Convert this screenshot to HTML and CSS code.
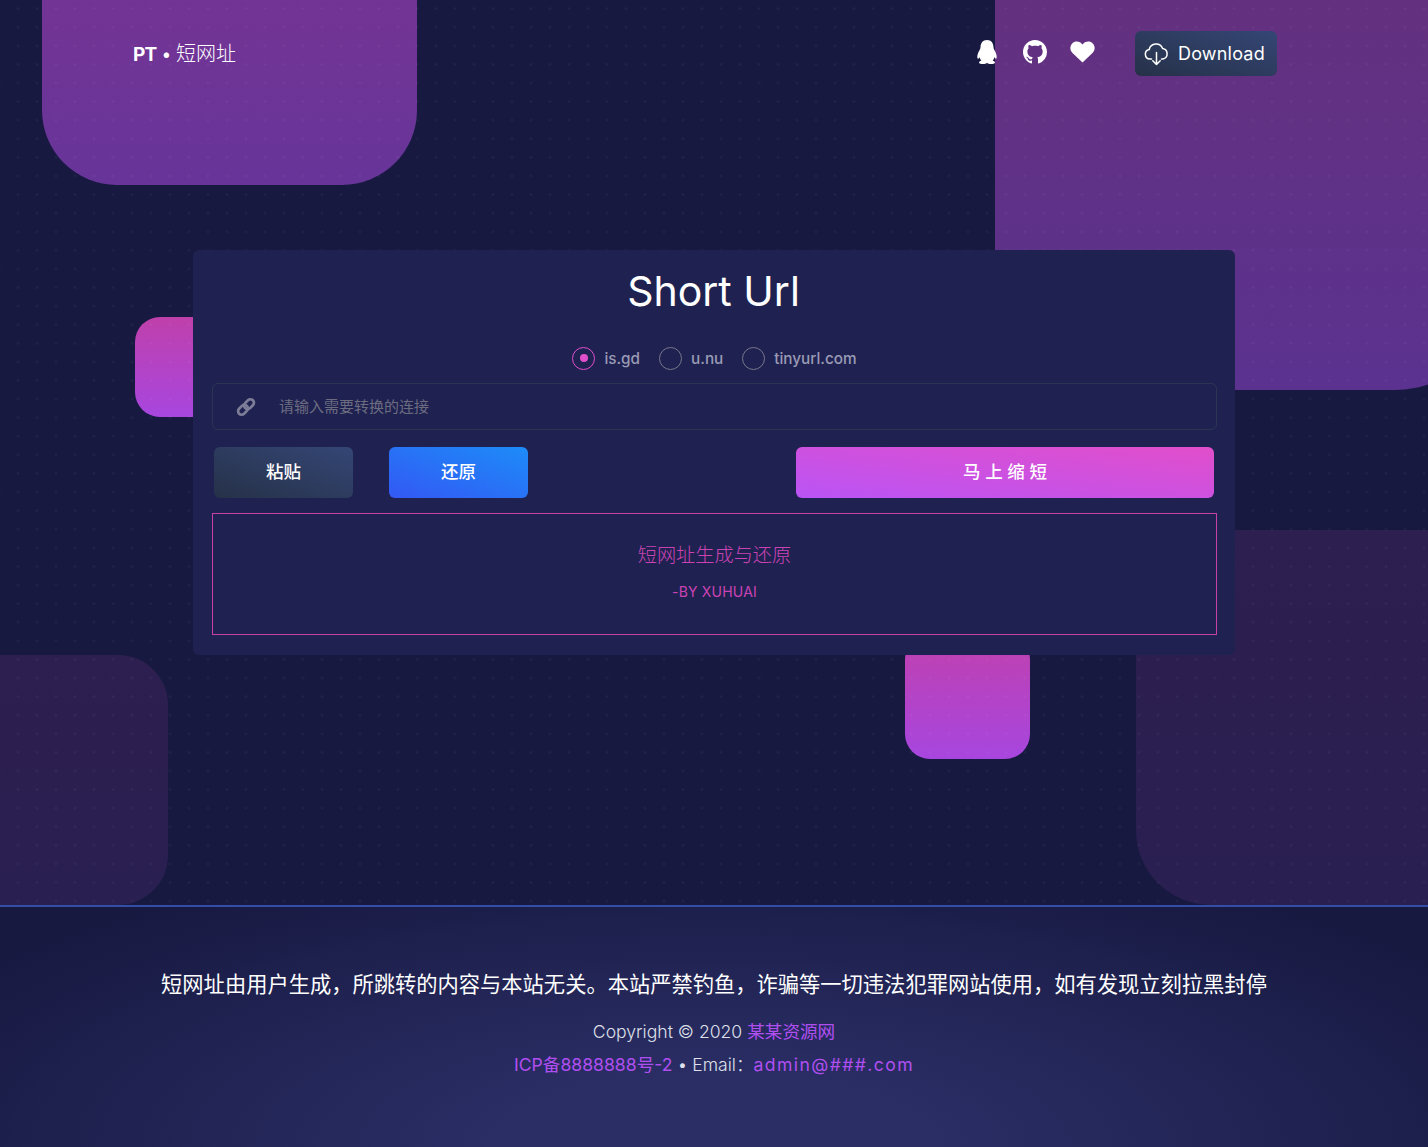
FILE: index.html
```html
<!DOCTYPE html>
<html lang="zh">
<head>
    <meta charset="UTF-8">
    <title>短网址</title>
    <link rel="stylesheet" href="styles.css">
</head>
<body>
    <div class="stage">
        <!-- background squares -->
        <div class="square square-top-left"></div>
        <div class="square square-top-right"></div>
        <div class="square square-pink-left"></div>
        <div class="square square-pink-bottom"></div>
        <div class="square square-low-left"></div>
        <div class="square square-low-right"></div>
        <div class="dots"></div>

        <nav class="navbar">
            <a class="brand" href="#"><b>PT</b> • 短网址</a>
            <div class="nav-links">
                <a class="nav-icon" href="#">
                    <svg width="22" height="24" viewBox="0 0 22 24"><path fill="#fff" d="M11 0C6.600 0 4.600 3.200 4.500 7.200 4.400 8.200 4.200 9 3.600 10c-1.300 2.200-2.300 4.700-2.300 7 0 1 .3 1.700.7 1.700.5 0 1-.6 1.500-1.500.3 1.300.9 2.400 1.800 3.300-1.300.5-2.300 1.200-2.300 2 0 1 2 1.500 4.300 1.500 1.300 0 2.600-.4 3.500-1h.4c.9.600 2.200 1 3.500 1 2.300 0 4.300-.5 4.300-1.500 0-.8-1-1.500-2.300-2 .9-.9 1.500-2 1.800-3.300.5.900 1 1.500 1.500 1.500.4 0 .7-.7.7-1.700 0-2.300-1-4.800-2.300-7-.6-1-.8-1.800-.9-2.800C17.400 3.200 15.400 0 11 0z"/></svg>
                </a>
                <a class="nav-icon" href="#">
                    <svg width="24" height="24" viewBox="0 0 16 16"><path fill="#fff" d="M8 0C3.58 0 0 3.58 0 8c0 3.54 2.29 6.53 5.47 7.59.4.07.55-.17.55-.38 0-.19-.01-.82-.01-1.49-2.01.37-2.53-.49-2.69-.94-.09-.23-.48-.94-.82-1.13-.28-.15-.68-.52-.01-.53.63-.01 1.08.58 1.23.82.72 1.21 1.87.87 2.33.66.07-.52.28-.87.51-1.07-1.78-.2-3.64-.89-3.64-3.95 0-.87.31-1.59.82-2.15-.08-.2-.36-1.02.08-2.12 0 0 .67-.21 2.2.82.64-.18 1.32-.27 2-.27.68 0 1.36.09 2 .27 1.53-1.04 2.2-.82 2.2-.82.44 1.1.16 1.92.08 2.12.51.56.82 1.27.82 2.15 0 3.07-1.87 3.75-3.65 3.95.29.25.54.73.54 1.48 0 1.07-.01 1.93-.01 2.2 0 .21.15.46.55.38A8.013 8.013 0 0016 8c0-4.42-3.58-8-8-8z"/></svg>
                </a>
                <a class="nav-icon" href="#">
                    <svg width="25" height="22" viewBox="0 0 25 22"><path fill="#fff" d="M12.500 21.500 2.500 12C-.3 9.300-.3 5 2.200 2.400 4.800-.3 9-.2 11.500 2.400l1 1 1-1c2.500-2.600 6.700-2.700 9.300 0 2.500 2.600 2.500 6.900-.3 9.600z"/></svg>
                </a>
                <a class="btn-download" href="#">
                    <svg width="25" height="24" viewBox="0 0 25 24" fill="none" stroke="#fff" stroke-width="1.500" stroke-linecap="round" stroke-linejoin="round"><path d="M7.500 17H6a4.800 4.800 0 0 1-.8-9.500A7 7 0 0 1 18.600 6.600 5.300 5.300 0 0 1 19 17h-1.500"/><path d="M12.500 10.500V22.500M8.800 18.800l3.700 3.700 3.700-3.700"/></svg>
                    Download
                </a>
            </div>
        </nav>

        <main class="card">
            <h1 class="card-title">Short Url</h1>
            <div class="radios">
                <label class="radio"><input type="radio" name="api" checked><i></i>is.gd</label>
                <label class="radio"><input type="radio" name="api"><i></i>u.nu</label>
                <label class="radio"><input type="radio" name="api"><i></i>tinyurl.com</label>
            </div>
            <div class="input-group">
                <span class="input-icon">
                    <svg width="20" height="20" viewBox="0 0 20 20" fill="none" stroke="#7d7d98" stroke-width="2.700"><rect x="7.500" y="3.700" width="11" height="7" rx="3.500" transform="rotate(-45 13 7.200)"/><rect x="1.500" y="9.300" width="11" height="7" rx="3.500" transform="rotate(-45 7 12.800)"/></svg>
                </span>
                <input class="url-input" type="text" placeholder="请输入需要转换的连接">
            </div>
            <div class="actions">
                <button class="btn btn-default">粘贴</button>
                <button class="btn btn-info">还原</button>
                <button class="btn btn-primary">马 上 缩 短</button>
            </div>
            <div class="result">
                <p class="result-title">短网址生成与还原</p>
                <p class="result-by">-BY XUHUAI</p>
            </div>
        </main>
    </div>

    <footer class="footer">
        <h4 class="notice">短网址由用户生成，所跳转的内容与本站无关。本站严禁钓鱼，诈骗等一切违法犯罪网站使用，如有发现立刻拉黑封停</h4>
        <p class="copy">Copyright © 2020 <a href="#">某某资源网</a></p>
        <p class="copy"><a href="#">ICP备8888888号-2</a> • Email：<a class="email" href="#">admin@###.com</a></p>
    </footer>
</body>
</html>
```

FILE: styles.css
```css
* { box-sizing: border-box; }
html, body { margin: 0; padding: 0; }
body {
    background: #171941;
    color: #fff;
    font-family: Inter, "Noto Sans CJK SC", sans-serif;
    overflow-x: hidden;
}
a { color: inherit; text-decoration: none; }

.stage {
    position: relative;
    height: 905px;
    overflow: hidden;
}

/* --- Background squares --- */
.square { position: absolute; }
.square-top-left {
    left: 42px; top: -190px; width: 375px; height: 375px;
    border-radius: 75px;
    background: linear-gradient(0deg, #673499 0%, #7f3590 100%);
}
.square-top-right {
    left: 995px; top: -110px; width: 500px; height: 500px;
    border-radius: 100px;
    background: linear-gradient(0deg, #5b3290 0%, #66307a 100%);
}
.square-pink-left {
    left: 135px; top: 317px; width: 125px; height: 100px;
    border-radius: 25px;
    background: linear-gradient(0deg, #a746df 0%, #bf40ab 100%);
}
.square-pink-bottom {
    left: 905px; top: 634px; width: 125px; height: 125px;
    border-radius: 25px;
    background: linear-gradient(0deg, #a746df 0%, #c040ad 100%);
}
.square-low-left {
    left: -82px; top: 655px; width: 250px; height: 250px;
    border-radius: 50px;
    background: linear-gradient(0deg, #291f50 0%, #2d1f50 100%);
}
.square-low-right {
    left: 1136px; top: 530px; width: 375px; height: 375px;
    border-radius: 75px;
    background: linear-gradient(0deg, #291f50 0%, #2d1f50 100%);
}
.dots {
    position: absolute;
    inset: 0;
    background-image: radial-gradient(circle, rgba(255, 255, 255, .04) 1px, transparent 1.600px);
    background-size: 19px 18.600px;
    background-position: 8.500px -.7px;
}

/* --- Navbar --- */
.navbar {
    position: relative;
    display: flex;
    align-items: center;
    justify-content: space-between;
    height: 107px;
    padding: 0 151px 0 133px;
}
.brand { font-size: 20px; font-weight: 300; padding-bottom: 2px; word-spacing: -1.500px; }
.brand b { font-weight: 700; font-size: 19px; letter-spacing: -.7px; }
.nav-links { display: flex; align-items: center; }
.nav-icon { display: flex; width: 47.500px; justify-content: center; margin-bottom: 4px; }
.btn-download {
    display: flex;
    align-items: center;
    gap: 9px;
    margin-left: 29px;
    width: 142px;
    height: 45px;
    padding-left: 9px;
    border-radius: 6px;
    font-size: 18px;
    letter-spacing: .2px;
    background: linear-gradient(to bottom left, #344675, #263148);
}

/* --- Card --- */
.card {
    position: relative;
    width: 1042px;
    height: 405px;
    margin: 143px auto 0;
    padding: 0 18px 0 19px;
    background: #1f2251;
    border-radius: 6px;
}
.card-title {
    margin: 0;
    padding: 14px 2px 0 0;
    height: 84px;
    text-align: center;
    font-size: 41px;
    line-height: 54px;
    font-weight: 400;
}
.radios {
    display: flex;
    justify-content: center;
    gap: 19px;
    height: 49px;
    padding-top: 13px;
}
.radio {
    display: flex;
    align-items: center;
    height: 22px;
    gap: 9px;
    font-size: 15.300px;
    font-weight: 500;
    color: #9a9ab5;
}
.radio input { display: none; }
.radio i {
    display: flex;
    align-items: center;
    justify-content: center;
    width: 23px;
    height: 23px;
    border: 1px solid #77778a;
    border-radius: 50%;
}
.radio input:checked + i { border-color: #e14eca; }
.radio input:checked + i::after {
    content: "";
    width: 8px;
    height: 8px;
    border-radius: 50%;
    background: #e14eca;
}
.input-group {
    display: flex;
    align-items: center;
    height: 47px;
    border: 1px solid #2b3553;
    border-radius: 6px;
}
.input-icon { display: flex; margin-left: 23px; }
.url-input {
    flex: 1;
    margin-left: 21px;
    border: 0;
    outline: 0;
    background: transparent;
    color: #fff;
    font-family: inherit;
    font-size: 15px;
}
.url-input::placeholder { color: #6c6c80; }
.actions {
    display: flex;
    align-items: center;
    height: 51px;
    margin: 17px 3px 0 2px;
}
.btn {
    height: 51px;
    width: 139px;
    padding-bottom: 6px;
    border: 0;
    border-radius: 6px;
    color: #fff;
    font-family: inherit;
    font-size: 17.500px;
    font-weight: 500;
}
.btn-default { background: linear-gradient(to bottom left, #344675, #263148); }
.btn-info { margin-left: 36px; background: linear-gradient(to bottom left, #1d8cf8, #3358f4); }
.btn-primary {
    margin-left: auto;
    width: 418px;
    background: linear-gradient(to bottom left, #e14eca, #ba54f5);
}
.result {
    height: 122px;
    margin-top: 15px;
    border: 1px solid #c93fa8;
    text-align: center;
    color: #cc42b4;
}
.result-title { margin: 28px 0 0; font-size: 19.200px; line-height: 26px; font-weight: 300; }
.result-by { margin: 14px 0 0; font-size: 14px; line-height: 20px; letter-spacing: .2px; }

/* --- Footer --- */
.footer {
    height: 242px;
    border-top: 2px solid #344ea8;
    padding-top: 62px;
    text-align: center;
    background: radial-gradient(ellipse 1010px 342px at 50% 100%, #2b2e65 0%, #2b2e65 20%, #171941 90%);
}
.notice { margin: 0 0 16px; font-size: 21.280px; line-height: 30px; font-weight: 400; }
.copy {
    margin: 0;
    font-size: 17.600px;
    line-height: 33px;
    font-weight: 300;
    color: #dfe0ea;
}
.copy a { color: #b04ff0; font-weight: 400; }
.copy .email { letter-spacing: 1.400px; }
```
